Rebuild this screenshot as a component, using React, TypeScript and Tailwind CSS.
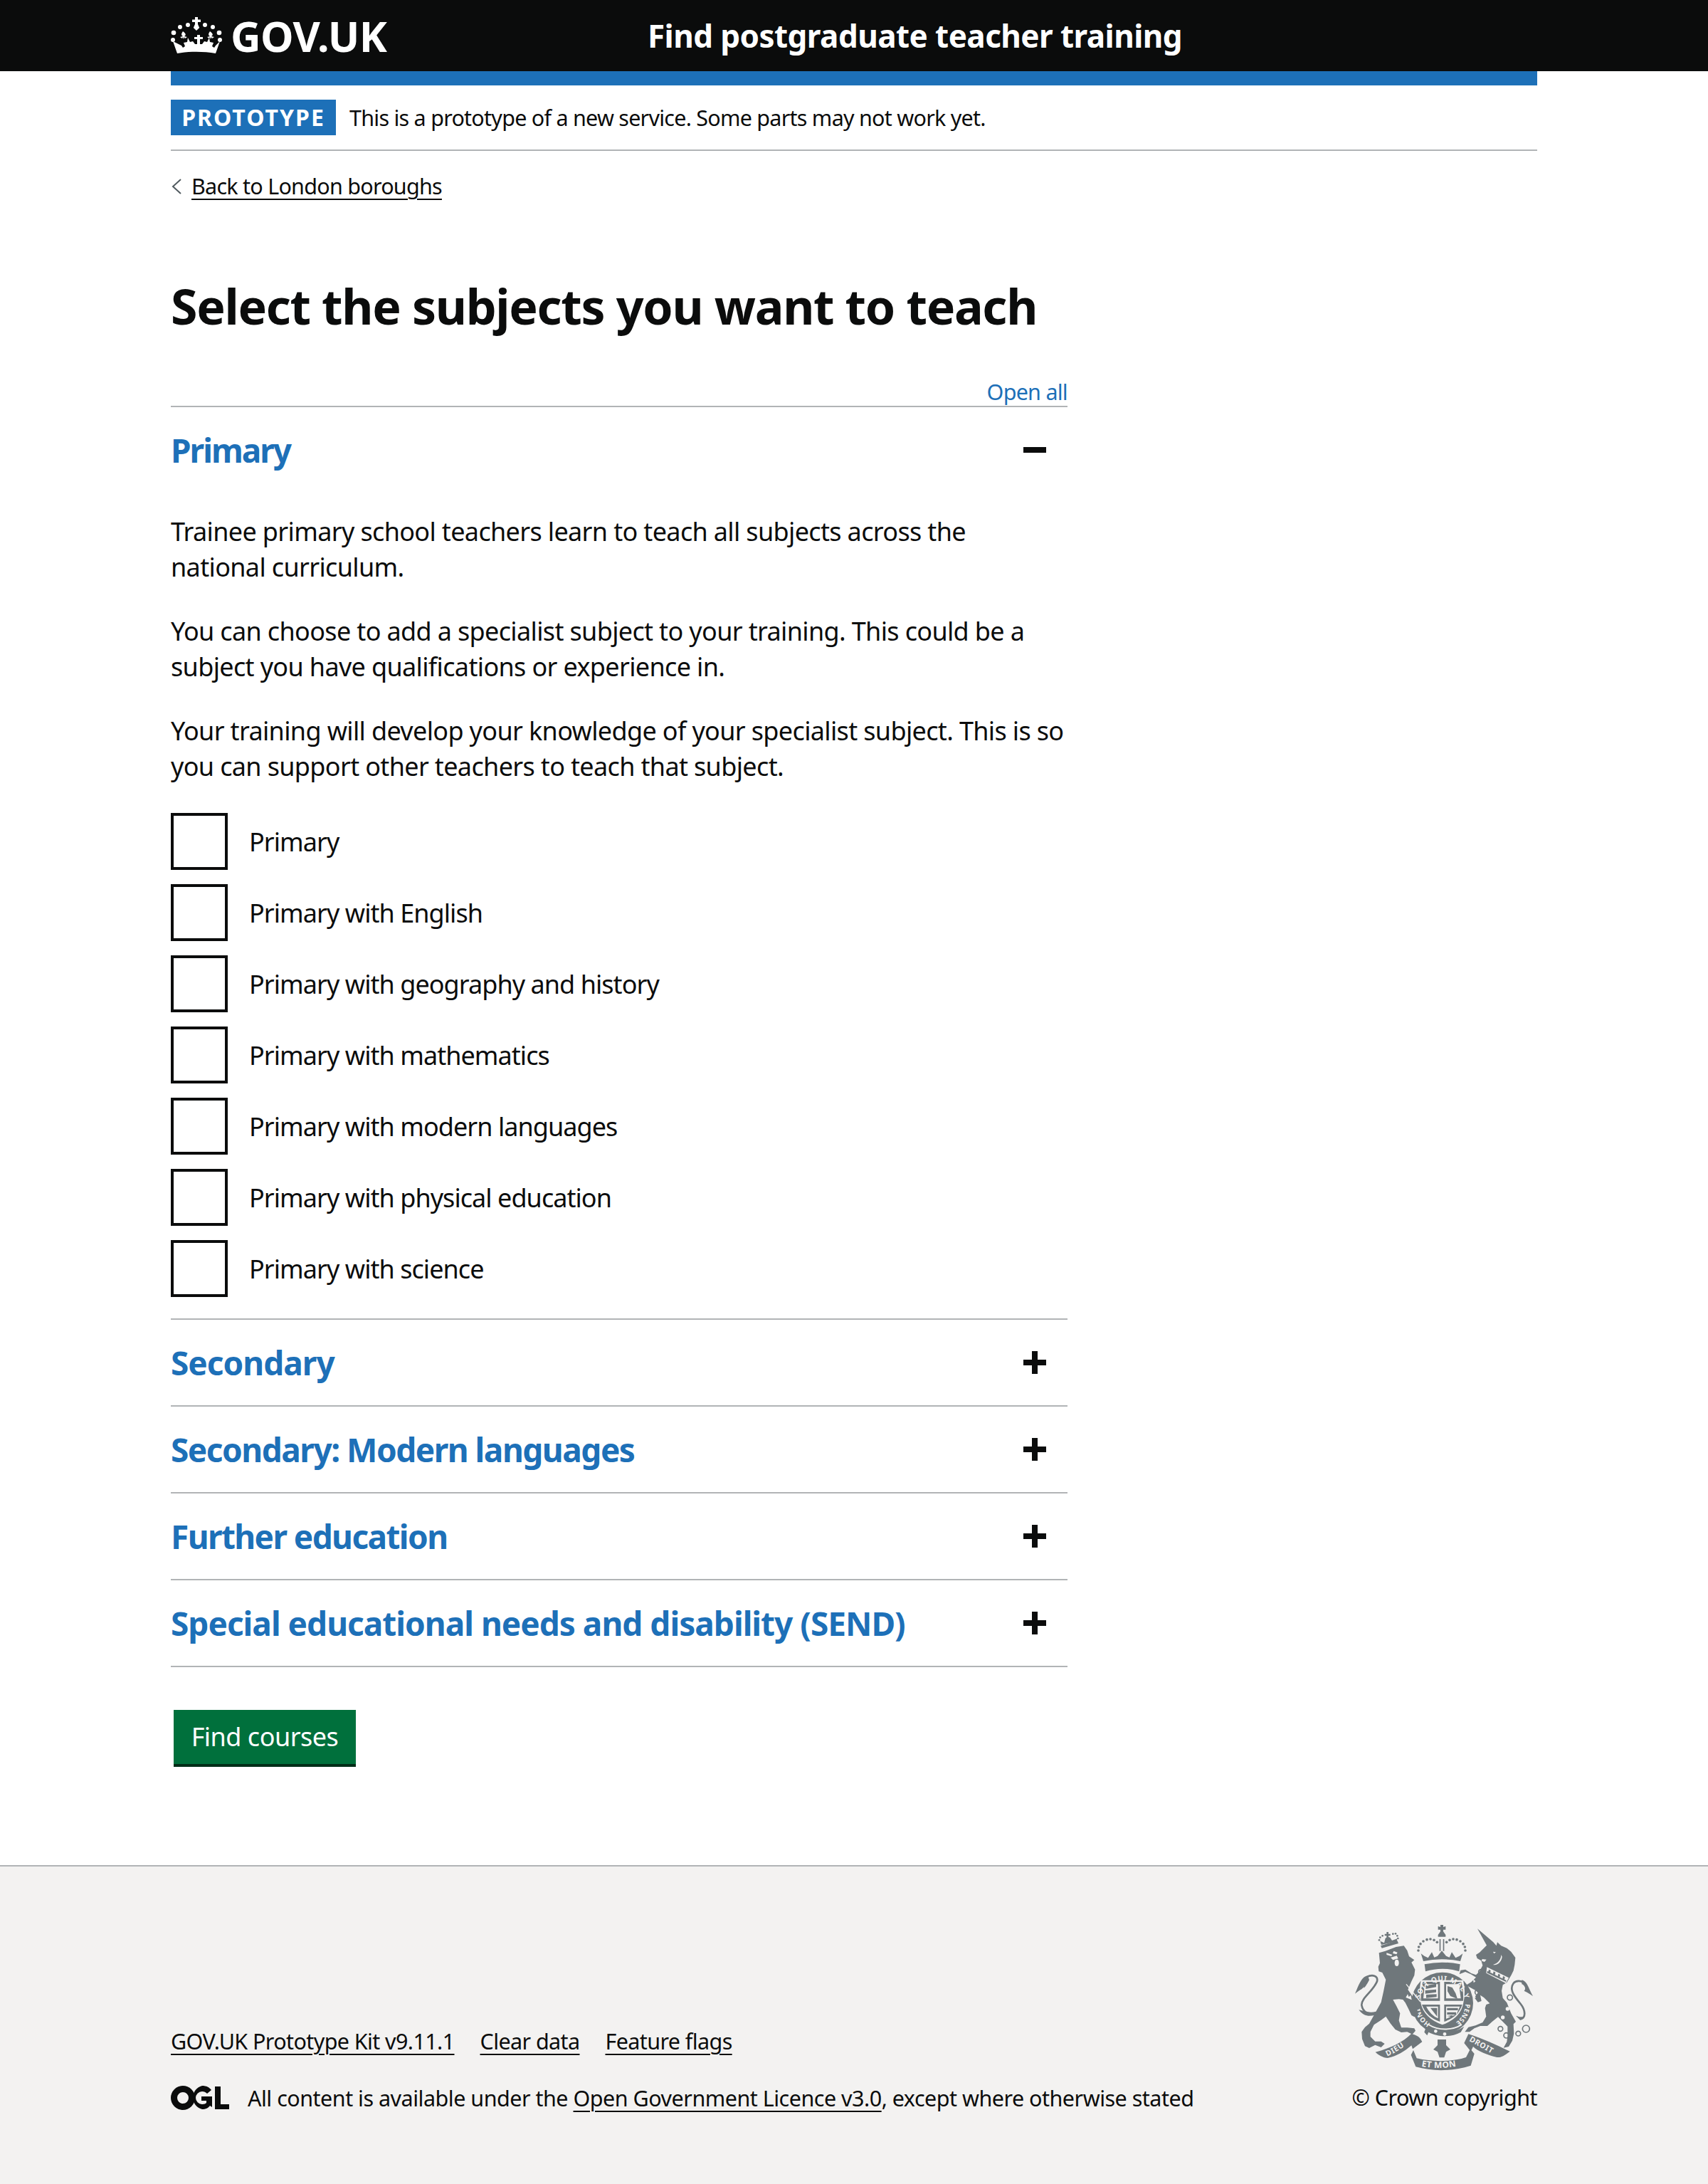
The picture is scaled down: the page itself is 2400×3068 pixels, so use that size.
import React from 'react'

const primarySubjects = [
  'Primary',
  'Primary with English',
  'Primary with geography and history',
  'Primary with mathematics',
  'Primary with modern languages',
  'Primary with physical education',
  'Primary with science',
]

const closedSections = [
  { title: 'Secondary', spacing: 'tracking-[-1px]' },
  { title: 'Secondary: Modern languages', spacing: 'tracking-[-1.5px]' },
  { title: 'Further education', spacing: 'tracking-[-1.6px]' },
  { title: 'Special educational needs and disability (SEND)', spacing: 'tracking-[-1px]' },
]

const CrownLogo = () => (
  <svg viewBox="0 0 72 52" className="w-[72px] h-[52px] shrink-0 fill-white">
    <path d="M34 0h4v3.5h4v3.5h-4v3l2.2 5-4.200 4-4.200-4L34 10V7h-4V3.500h4z" />
    <circle cx="24" cy="11" r="3" />
    <circle cx="48" cy="11" r="3" />
    <circle cx="13" cy="14" r="3" />
    <circle cx="59" cy="14" r="3" />
    <circle cx="4" cy="22" r="3.300" />
    <circle cx="68" cy="22" r="3.300" />
    <circle cx="3" cy="32" r="3" />
    <circle cx="69" cy="32" r="3" />
    <path d="M3 34 9 51c17-3 37-3 54 0l6-17-6 6-2 3-3-2 2-5-5-1-1-6-3 6-4-1-3 4h-3v-7h4v-3h-4v-3h-4v3h-4v3h4v7h-3l-3-4-4 1-3-6-1 6-5 1 2 5-3 2-2-3z" />
    <path d="M17 20c-2 3-3 5 0 7l-4 1 3 2 1-2 1 3 1-3 1 2 3-2-4-1c3-2 2-4-2-7zM55 20c-2 3-3 5 0 7l-4 1 3 2 1-2 1 3 1-3 1 2 3-2-4-1c3-2 2-4-2-7z" />
  </svg>
)

const OglLogo = () => (
  <svg viewBox="0 0 82 34" className="w-[82px] h-[34px] shrink-0 fill-[#0b0c0c]">
    <path
      fillRule="evenodd"
      d="M17 0a17 17 0 1 1 0 34 17 17 0 0 1 0-34zm0 9a8 8 0 1 0 0 16 8 8 0 0 0 0-16z"
    />
    <path
      fillRule="evenodd"
      d="M44 0c6 0 10 2 13 6l-6 5c-2-2-4-3-7-3a9 9 0 0 0 0 18c3 0 5-1 6-2v-3h-7v-6h15v15l-3-2c-2 3-6 5-11 5a17 17 0 0 1 0-33z"
    />
    <path d="M62 1h8v25h12v7H62z" />
  </svg>
)

// traced at 3x, so one viewBox unit is a third of a pixel
const RoyalArms = () => (
  <svg viewBox="0 0 780 645" className="w-[260px] h-[215px] fill-[#6f777b]">
    <defs>
      <path id="garterTop" d="M283 345A97 97 0 0 1 477 345" />
      <path id="garterRight" d="M477 345A97 97 0 0 1 430 428" />
      <path id="garterLeft" d="M330 428A97 97 0 0 1 283 345" />
      <path id="ribbonLeft" d="M148 566Q195 545 245 505" />
      <path id="ribbonMid" d="M292 608Q380 625 472 600" />
      <path id="ribbonRight" d="M492 500L612 568" />
    </defs>

    {/* royal crown */}
    <path d="M372 12h12v9l10-3v14h-10v8l10 14v8h-32v-8l10-14v-8h-10V18l10 3z" />
    <path d="M368 72h5v50h-5zM383 72h5v50h-5z" />
    <path d="M300 165l-10-32 14 10 16 8 16-24 10 22 14-6 18-22 18 22 14 6 10-22 16 24 16-8 14-10-10 32q-78-16-156 0z" />
    <path d="M305 178q73-16 150 0l-4 30q-70-22-142 0z" />
    {[
      [279, 120], [281, 105], [288, 92], [300, 81], [315, 74], [330, 72], [345, 76], [358, 85],
      [398, 85], [411, 76], [426, 72], [441, 74], [456, 81], [468, 92], [475, 105], [477, 120],
    ].map(([cx, cy]) => (
      <circle key={cx} cx={cx} cy={cy} r="5.500" />
    ))}

    {/* garter and shield */}
    <circle cx="380" cy="342" r="130" />
    <path d="M290 245h178q12 50 0 100-12 60-88 88-76-28-90-88-10-50 0-100z" fill="#f3f2f1" />
    <path d="M298 252h72v80h-80q-2-45 8-80zM388 252h72q10 40 8 80h-80zM294 348h76v72q-58-20-76-72zM388 348h76q-16 52-76 72z" />
    <path d="M306 262h56v60h-62zM396 262h54l8 60h-62zM396 356h58l-14 32-44 20zM312 356h50v50q-32-14-50-50z" fill="#f3f2f1" />
    <path d="M310 268l44-8v14l-44 8zM308 288l46-4v12l-46 6zM312 306l44-2v12l-44 4zM402 270l20 6 14 24 8 24-30-12-12-20zM400 362h46v10h-46zM400 380h38v10h-38zM400 396l24-4-4 8zM330 362h28v36z" />

    <text fontFamily="Noto Sans, sans-serif" fontWeight="700" fontSize="30" fill="#f3f2f1" letterSpacing="2" textAnchor="middle">
      <textPath href="#garterTop" startOffset="50%">SOIT QUI MAL Y</textPath>
    </text>
    <text fontFamily="Noto Sans, sans-serif" fontWeight="700" fontSize="28" fill="#f3f2f1" letterSpacing="1">
      <textPath href="#garterRight">PENSE</textPath>
    </text>
    <text fontFamily="Noto Sans, sans-serif" fontWeight="700" fontSize="28" fill="#f3f2f1" letterSpacing="1">
      <textPath href="#garterLeft">HONI</textPath>
    </text>

    {/* buckle strap */}
    <path d="M312 440c40 30 110 34 160 0l-14 24c-40 24-100 20-136 0l-6 14-12-14z" />
    <path d="M322 432c40 26 100 26 140 0" fill="none" stroke="#f3f2f1" strokeWidth="6" />
    <circle cx="352" cy="460" r="7" fill="#f3f2f1" />
    <circle cx="390" cy="472" r="7" fill="#f3f2f1" />

    {/* lion */}
    <path d="M113 130l27-8 45-17 33-5 14 20 8 25 22 15-12 10 15 30-3 25-12 25-15 35 14 20 13 20 10 35 7 30-17 10-12-7-13-28-13-25-10-13-17-2-25 2 15 28 15 30-5 30 10 30h25l30 3 5 10-13 15-22-10-25 2-25-12-20-25-20-30-20 15-30 20-15 30v20l20 20h25l15 10-15 15-25-10-25 13-18-8-12-30-2-30 14-20 18-15 25-45 25-45 10-45 10-50-15-30-15-5-2-20 7-15z" />
    <path d="M228 262l60 74" stroke="#f3f2f1" strokeWidth="4" />
    <path d="M145 130l24 8-4 6-20-6zM175 122l16 6-4 8-16-4zM162 150l26-8 6 12-22 6z" fill="#f3f2f1" />
    <ellipse cx="188" cy="172" rx="9" ry="14" fill="#f3f2f1" />
    <path d="M226 318l8-14 5 12 8-8 4 20z" fill="#f3f2f1" />
    {/* lion tail */}
    <path
      d="M105 380C70 395 45 380 40 350 38 320 90 290 105 250 110 225 85 220 60 232"
      fill="none"
      stroke="#6f777b"
      strokeWidth="8"
    />
    <path d="M66 226C40 230 30 260 12 302c18-15 28-17 38-30-5 14 8 0 22-28z" />
    <path d="M28 370c22 5 42 15 72 8l-5 14c-25 8-50 3-67-22z" />
    {/* lion crown */}
    <path d="M120 100l70-22 5 12-70 20z" />
    <path d="M123 96l-5-16 17 8 5-20 10-6 10 3 8 13 22-8-2 12z" />
    <path d="M145 42h8v8h8v8h-8v10h-8V58h-8v-8h8z" />
    {[[114, 76], [118, 65], [128, 58], [172, 50], [183, 49], [190, 58], [193, 69]].map(([cx, cy]) => (
      <circle key={cx} cx={cx} cy={cy} r="4" />
    ))}

    {/* unicorn */}
    <g transform="translate(390 0)">
      <path d="M138 28l67 57 13 15 4-15 16 15 24 10 18 15 18 25-3 30-5 25-10 20-18 30-17 10-5 25 5 30 17 20 18 45 20 35-10 10 2 40-7 30-15 25-22 5 14-25 3-25v-40l-20-20-20-20-25 20-20 18h-30l-25 10-20 15H85l15-20 30-7 30-13 15-25-5-35 5-15 15-5-25-25-15-10 5 25-15 5-15-20 15-20-10-10-18-10-22-12 22-13 20-20-22-13-23-10-25 10 5-17 20-3 25 16 20 7 15-15 13-25-6-20-17-10-5-15 15-10 15-15 15-15z" />
      <path d="M178 190l92 45-12 23-83-43z" fill="#f3f2f1" />
      <path d="M186 200l8 4-2 10-8-4zM206 208l8 4-2 10-8-4zM226 218l8 4-2 10-8-4zM246 228l8 4-2 10-8-4zM180 206l80 40-2 6-80-38z" />
      <path d="M158 156l18 2-8 10-12-4zM204 125l12 2-8 6z" fill="#f3f2f1" />
      <path d="M238 138c0 20-14 36-34 42 20 4 36-14 38-34z" fill="#f3f2f1" />
      <circle cx="245" cy="402" r="8" fill="#f3f2f1" />
      <circle cx="265" cy="366" r="8" fill="#f3f2f1" />
      <path d="M120 240l10 10-8 6zM118 300l14 18-8 4z" fill="#f3f2f1" />
      {/* chain rings */}
      <g fill="none" stroke="#6f777b" strokeWidth="5">
        <circle cx="153" cy="210" r="10" />
        <circle cx="140" cy="296" r="12" />
        <circle cx="275" cy="318" r="11" />
        <circle cx="235" cy="450" r="10" />
        <circle cx="260" cy="478" r="11" />
        <circle cx="310" cy="470" r="10" />
        <circle cx="343" cy="450" r="15" />
      </g>
      {/* unicorn tail */}
      <path
        d="M318 410C345 405 340 370 320 345 295 315 270 285 290 258 300 245 325 245 340 262"
        fill="none"
        stroke="#6f777b"
        strokeWidth="8"
      />
      <path d="M325 244c25 6 30 41 47 68-17-12-27-17-37-22 10-10 0-25-10-28z" />
      <path d="M300 395c12 4 24 8 40 2l-22 16z" />
    </g>

    {/* motto ribbon */}
    <path d="M98 548c67-18 117-43 152-78 20 8 35 10 45 35l-40 30-5-15c-30 25-60 45-100 53-20-1-40-13-52-25z" />
    <path d="M258 540l14 34c68 16 148 16 208-4l18-35 17 20-15 50c-80 25-160 25-232 5l-20-50z" />
    <path d="M490 472c60 18 120 48 175 73-25 20-40 27-55 25-40-10-80-25-100-45l-10 20-28-35z" />
    <path d="M360 495h36v24l18 18-18 10-8 24h-20l-8-24-18-10 18-18z" />

    <text fontFamily="Noto Sans, sans-serif" fontWeight="700" fontSize="32" fill="#f3f2f1" letterSpacing="2">
      <textPath href="#ribbonLeft">DIEU</textPath>
    </text>
    <text fontFamily="Noto Sans, sans-serif" fontWeight="700" fontSize="36" fill="#f3f2f1" letterSpacing="1">
      <textPath href="#ribbonMid">ET MON</textPath>
    </text>
    <text fontFamily="Noto Sans, sans-serif" fontWeight="700" fontSize="32" fill="#f3f2f1" letterSpacing="2">
      <textPath href="#ribbonRight">DROIT</textPath>
    </text>
  </svg>
)

const ClosedSection = ({ title, spacing }: { title: string; spacing: string }) => (
  <div className="h-[122px] border-b-2 border-[#b1b4b6] flex items-center justify-between pr-[30px]">
    <h2 className={`text-[46px] leading-[60px] font-bold text-[#1d70b8] ${spacing}`}>{title}</h2>
    <span className="relative w-[32px] h-[32px] shrink-0">
      <span className="absolute left-0 top-[12px] w-[32px] h-[8px] bg-[#0b0c0c]"></span>
      <span className="absolute left-[12px] top-0 w-[8px] h-[32px] bg-[#0b0c0c]"></span>
    </span>
  </div>
)

const App = () => {
  return (
    <div className="min-h-[3068px] flex flex-col font-['Noto_Sans',sans-serif] text-[#0b0c0c] bg-white">
      <header className="bg-[#0b0c0c] h-[100px] shrink-0">
        <div className="mx-[240px] h-full flex items-center">
          <div className="w-[670px] flex items-center gap-[12px]">
            <CrownLogo />
            <span className="text-[59px] leading-none font-bold text-white tracking-[-0.7px]">GOV.UK</span>
          </div>
          <span className="text-[44px] leading-none font-bold text-white tracking-[-0.56px]">
            Find postgraduate teacher training
          </span>
        </div>
      </header>

      <main className="mx-[240px] flex-1">
        <div className="h-[20px] bg-[#1d70b8]"></div>

        <div className="h-[92px] pt-[20px] border-b-2 border-[#b1b4b6] flex items-start">
          <strong className="h-[50px] w-[232px] bg-[#1d70b8] text-white text-[32px] leading-[50px] font-bold tracking-[2px] text-center">
            PROTOTYPE
          </strong>
          <span className="ml-[19px] text-[30.5px] leading-[50px] tracking-[-0.75px]">
            This is a prototype of a new service. Some parts may not work yet.
          </span>
        </div>

        <div className="mt-[30px] h-[40px] flex items-center text-[30.5px] tracking-[-0.75px]">
          <svg viewBox="0 0 16 24" className="w-[16px] h-[24px] mr-[13px] fill-none stroke-[#505a5f] stroke-2">
            <path d="M14 2 3 12l11 10" />
          </svg>
          <a href="#" className="underline decoration-2 underline-offset-[6px]">Back to London boroughs</a>
        </div>

        <h1 className="mt-[106px] text-[68px] leading-[84px] font-bold tracking-[-1.3px]">
          Select the subjects you want to teach
        </h1>

        <div className="w-[1260px] mt-[58px]">
          <div className="h-[40px] text-right">
            <a href="#" className="text-[30.5px] leading-[40px] text-[#1d70b8] tracking-[-0.75px]">Open all</a>
          </div>

          <div className="border-t-2 border-b-2 border-[#b1b4b6] pb-[30px]">
            <div className="h-[120px] flex items-center justify-between pr-[30px]">
              <h2 className="text-[46px] leading-[60px] font-bold text-[#1d70b8] tracking-[-2px]">Primary</h2>
              <span className="w-[32px] h-[8px] bg-[#0b0c0c]"></span>
            </div>
            <div className="pt-[30px] flex flex-col gap-[40px] text-[36px] leading-[50px] tracking-[-0.65px]">
              <p>
                Trainee primary school teachers learn to teach all subjects across the
                <br />
                national curriculum.
              </p>
              <p>
                You can choose to add a specialist subject to your training. This could be a
                <br />
                subject you have qualifications or experience in.
              </p>
              <p>
                Your training will develop your knowledge of your specialist subject. This is so
                <br />
                you can support other teachers to teach that subject.
              </p>
            </div>
            <div className="mt-[40px] flex flex-col gap-[20px]">
              {primarySubjects.map((subject) => (
                <label key={subject} className="flex items-center gap-[30px] text-[36px] leading-[50px] tracking-[-0.95px]">
                  <span className="w-[80px] h-[80px] border-4 border-[#0b0c0c] bg-white shrink-0"></span>
                  <span className="pt-[2px]">{subject}</span>
                </label>
              ))}
            </div>
          </div>

          {closedSections.map((section) => (
            <ClosedSection key={section.title} title={section.title} spacing={section.spacing} />
          ))}
        </div>

        <button className="ml-[4px] mt-[60px] w-[256px] h-[80px] bg-[#00703c] border-b-4 border-[#002d18] text-white text-[36px] leading-[50px] tracking-[-0.5px]">
          Find courses
        </button>
      </main>

      <footer className="h-[448px] shrink-0 bg-[#f3f2f1] border-t-2 border-[#b1b4b6] px-[240px] pt-[78px] flex items-start justify-between">
        <div className="pt-[142px] text-[30.5px] leading-[50px] tracking-[-0.6px]">
          <div className="flex gap-[36px]">
            <a href="#" className="underline decoration-2 underline-offset-[6px]">GOV.UK Prototype Kit v9.11.1</a>
            <a href="#" className="underline decoration-2 underline-offset-[6px]">Clear data</a>
            <a href="#" className="underline decoration-2 underline-offset-[6px]">Feature flags</a>
          </div>
          <div className="mt-[30px] flex items-center tracking-[-0.5px]">
            <OglLogo />
            <span className="ml-[26px]">
              All content is available under the{' '}
              <a href="#" className="underline decoration-2 underline-offset-[6px]">Open Government Licence v3.0</a>
              , except where otherwise stated
            </span>
          </div>
        </div>
        <div className="flex flex-col items-end">
          <RoyalArms />
          <a href="#" className="mt-[6px] text-[30.5px] leading-[50px] tracking-[-0.5px]">© Crown copyright</a>
        </div>
      </footer>
    </div>
  )
}

export default App
